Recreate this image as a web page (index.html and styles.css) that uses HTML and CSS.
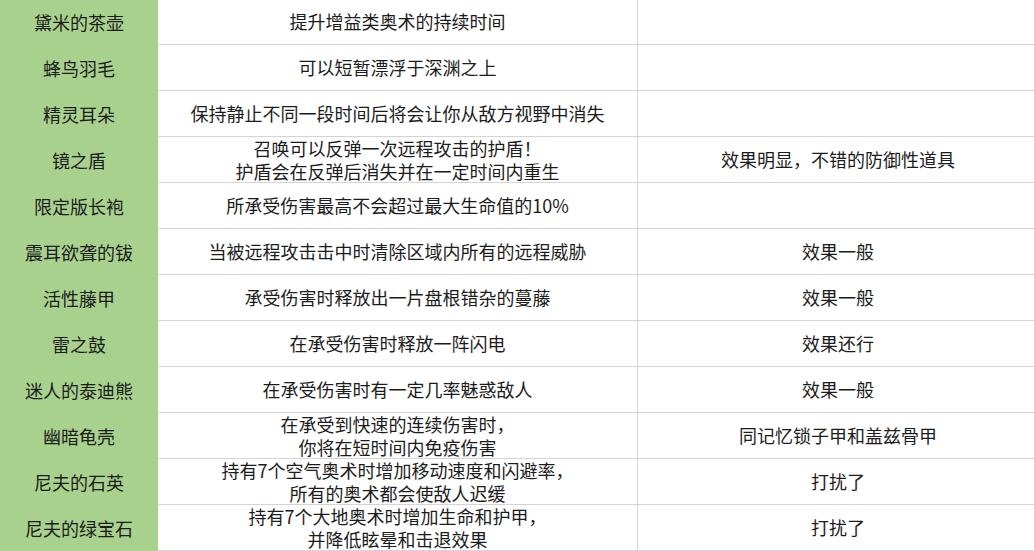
FILE: index.html
```html
<!DOCTYPE html>
<html lang="zh">
<head>
<meta charset="utf-8">
<title>饰品</title>
<link rel="stylesheet" href="styles.css">
</head>
<body>
<div class="table">
  <div class="row"><div class="name">黛米的茶壶</div><div class="cell">提升增益类奥术的持续时间</div><div class="cell note"></div></div>
  <div class="row"><div class="name">蜂鸟羽毛</div><div class="cell">可以短暂漂浮于深渊之上</div><div class="cell note"></div></div>
  <div class="row"><div class="name">精灵耳朵</div><div class="cell">保持静止不同一段时间后将会让你从敌方视野中消失</div><div class="cell note"></div></div>
  <div class="row"><div class="name">镜之盾</div><div class="cell">召唤可以反弹一次远程攻击的护盾！<br>护盾会在反弹后消失并在一定时间内重生</div><div class="cell note">效果明显，不错的防御性道具</div></div>
  <div class="row"><div class="name">限定版长袍</div><div class="cell">所承受伤害最高不会超过最大生命值的10%</div><div class="cell note"></div></div>
  <div class="row"><div class="name">震耳欲聋的钹</div><div class="cell">当被远程攻击击中时清除区域内所有的远程威胁</div><div class="cell note">效果一般</div></div>
  <div class="row"><div class="name">活性藤甲</div><div class="cell">承受伤害时释放出一片盘根错杂的蔓藤</div><div class="cell note">效果一般</div></div>
  <div class="row"><div class="name">雷之鼓</div><div class="cell">在承受伤害时释放一阵闪电</div><div class="cell note">效果还行</div></div>
  <div class="row"><div class="name">迷人的泰迪熊</div><div class="cell">在承受伤害时有一定几率魅惑敌人</div><div class="cell note">效果一般</div></div>
  <div class="row"><div class="name">幽暗龟壳</div><div class="cell">在承受到快速的连续伤害时，<br>你将在短时间内免疫伤害</div><div class="cell note">同记忆锁子甲和盖兹骨甲</div></div>
  <div class="row"><div class="name">尼夫的石英</div><div class="cell">持有7个空气奥术时增加移动速度和闪避率，<br>所有的奥术都会使敌人迟缓</div><div class="cell note">打扰了</div></div>
  <div class="row"><div class="name">尼夫的绿宝石</div><div class="cell">持有7个大地奥术时增加生命和护甲，<br>并降低眩晕和击退效果</div><div class="cell note">打扰了</div></div>
</div>
</body>
</html>
```
FILE: styles.css
```css
html, body {
  margin: 0;
  padding: 0;
  background: #ffffff;
}
body {
  width: 1034px;
  height: 551px;
  overflow: hidden;
  font-family: "Noto Sans CJK SC", "Noto Sans", sans-serif;
  font-size: 18px;
  color: #1c1c1c;
}
.table {
  margin-top: -1px;
  display: flex;
  flex-direction: column;
}
.row {
  display: grid;
  grid-template-columns: 158px 479px 1fr;
  height: 46px;
}
.row > div {
  display: flex;
  align-items: center;
  justify-content: center;
  text-align: center;
  line-height: 23px;
  white-space: nowrap;
}
.name {
  background: #a9d18e;
  height: 46px;
}
.cell {
  border-bottom: 1px solid #d4d4d4;
  height: 45px;
}
.cell.note {
  border-left: 1px solid #d4d4d4;
  padding-left: 4px;
}
```
